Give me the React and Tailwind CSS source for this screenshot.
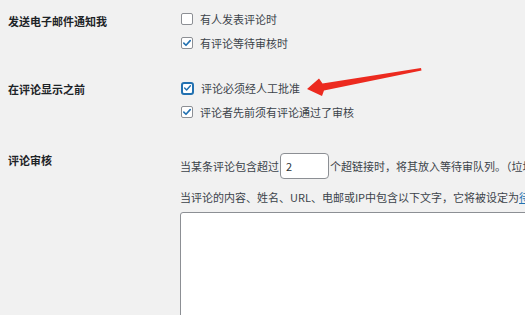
import React from 'react';

const font = { fontFamily: '"Noto Sans CJK SC", "Liberation Sans", sans-serif' };

const Check = ({ checked, focused }) => (
  <span
    className={
      focused
        ? 'flex h-[13px] w-[13px] shrink-0 items-center justify-center rounded-[3px] border-2 border-[#2271b1] bg-white'
        : 'flex h-[12px] w-[12px] shrink-0 items-center justify-center rounded-[2px] border border-[#8c8f94] bg-white'
    }
  >
    {checked && (
      <svg width="10" height="10" viewBox="0 0 10 10">
        <path d="M1.8 5.1 L4 7.3 L8.2 2.6" fill="none" stroke="#2271b1" strokeWidth="1.6" strokeLinecap="round" strokeLinejoin="round" />
      </svg>
    )}
  </span>
);

const CheckRow = ({ label, checked, focused }) => (
  <label className="flex h-[24px] items-center gap-[7px] pl-px">
    <Check checked={checked} focused={focused} />
    <span>{label}</span>
  </label>
);

const Section = ({ title, className, children }) => (
  <div className={`flex ${className}`}>
    <div className="w-[180px] shrink-0 pl-[8px]">
      <div className="flex h-[24px] items-center font-bold text-[#1d2327]">{title}</div>
    </div>
    <div className="min-w-0 flex-1">{children}</div>
  </div>
);

const App = () => {
  return (
    <div
      className="relative h-[315px] w-[525px] overflow-hidden whitespace-nowrap bg-[#f1f1f1] text-[11px] text-[#3c434a]"
      style={font}
    >
      <Section title="发送电子邮件通知我" className="pt-[9px]">
        <div className="-mt-[2px]">
          <CheckRow label="有人发表评论时" />
          <CheckRow label="有评论等待审核时" checked />
        </div>
      </Section>

      <Section title="在评论显示之前" className="mt-[22px]">
        <div className="-mt-[1px]">
          <CheckRow label="评论必须经人工批准" checked focused />
          <CheckRow label="评论者先前须有评论通过了审核" checked />
        </div>
      </Section>

      <Section title="评论审核" className="mt-[24px]">
        <div className="mt-[5px] flex h-[26px] items-center">
          <span className="shrink-0">当某条评论包含超过</span>
          <span className="mx-px flex h-[26px] w-[49px] shrink-0 items-center rounded-[4px] border border-[#8c8f94] bg-white pl-[5px] text-[#2c3338]">
            2
          </span>
          <span className="shrink-0">个超链接时，将其放入等待审队列。（垃圾评论的一个常见特征是包含大量的超链接。）</span>
        </div>
        <div className="mt-[7px] flex h-[22px] items-center">
          <span className="shrink-0">当评论的内容、姓名、URL、电邮或IP中包含以下文字，它将被设定为</span>
          <a className="shrink-0 text-[#2271b1] underline">待审</a>
          <span className="shrink-0">。每行输入一个词或IP地址。</span>
        </div>
        <div className="mt-[4px] h-[120px] w-[420px] shrink-0 rounded-[3px] border border-[#8c8f94] bg-white" />
      </Section>

      <svg className="pointer-events-none absolute left-0 top-0" width="525" height="315">
        <polygon
          points="307,89 319,78.5 322.5,83.5 421,68 421.5,70.5 324,90.5 322,96"
          fill="#ec2a1f"
        />
      </svg>
    </div>
  );
};

export default App;
